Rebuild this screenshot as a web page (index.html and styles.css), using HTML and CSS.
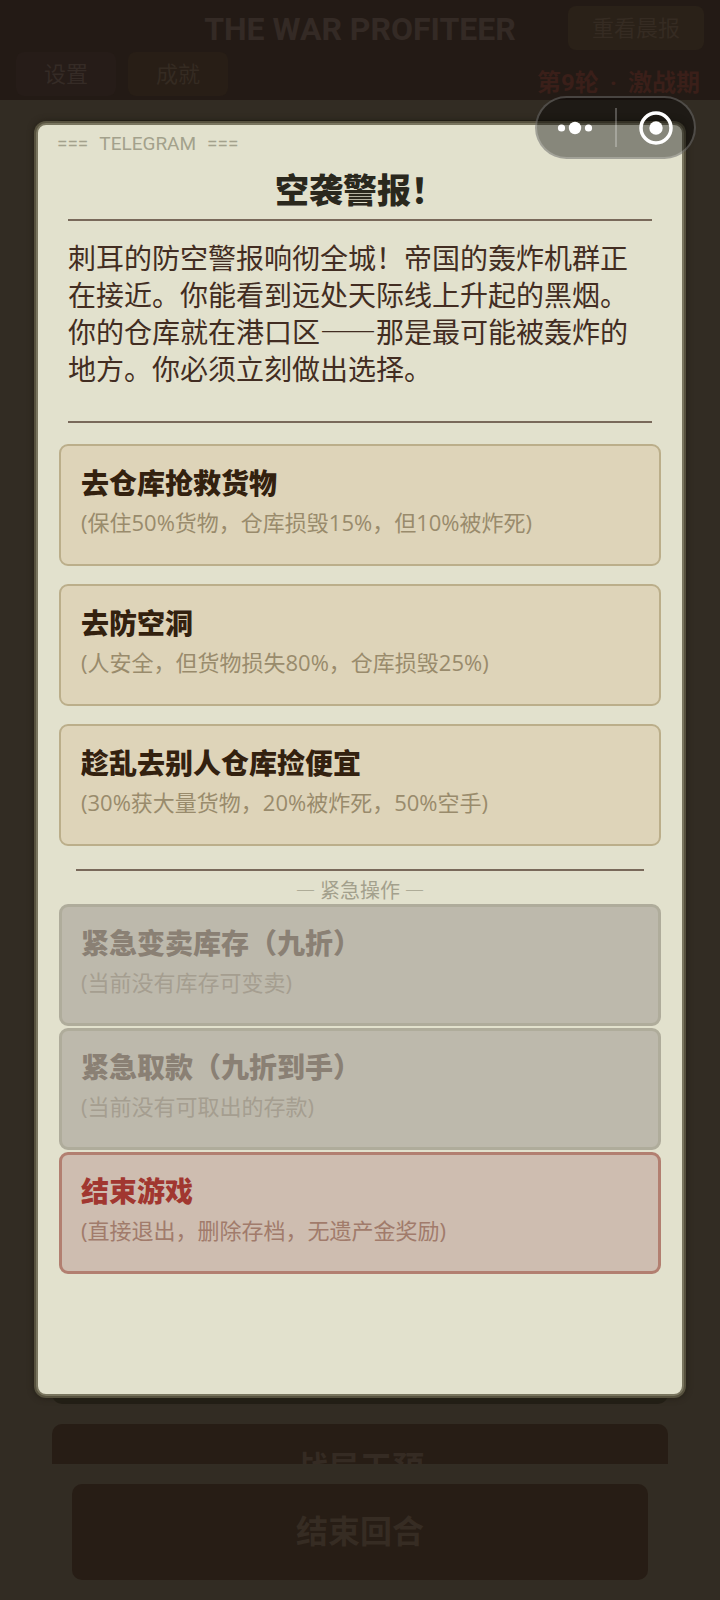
FILE: index.html
```html
<!DOCTYPE html>
<html lang="zh-CN">
<head>
<meta charset="utf-8">
<meta name="viewport" content="width=device-width, initial-scale=1">
<title>THE WAR PROFITEER</title>
<link rel="stylesheet" href="styles.css">
</head>
<body>
<div class="app">
  <header class="topbar">
    <h1 class="topbar-title">THE WAR PROFITEER</h1>
    <button class="chip chip-report" type="button">重看晨报</button>
    <div class="topbar-tools">
      <button class="chip chip-plain" type="button">设置</button>
      <button class="chip" type="button">成就</button>
    </div>
    <p class="round"><span>第9轮</span><span>·</span><span>激战期</span></p>
  </header>
  <main class="board">
    <div class="board-card"></div>
    <button class="board-action" type="button">战局干预</button>
  </main>
  <footer class="bottombar">
    <button class="end-turn" type="button">结束回合</button>
  </footer>
</div>

<div class="overlay">
  <section class="telegram" role="dialog" aria-labelledby="telegram-title">
    <p class="telegram-mark"><span>===</span><span>TELEGRAM</span><span>===</span></p>
    <h2 class="telegram-title" id="telegram-title">空袭警报！</h2>
    <p class="telegram-body">刺耳的防空警报响彻全城！帝国的轰炸机群正在接近。你能看到远处天际线上升起的黑烟。你的仓库就在港口区——那是最可能被轰炸的地方。你必须立刻做出选择。</p>
    <div class="options">
      <button class="option" type="button">
        <span class="option-name">去仓库抢救货物</span>
        <span class="option-note">(保住50%货物，仓库损毁15%，但10%被炸死)</span>
      </button>
      <button class="option" type="button">
        <span class="option-name">去防空洞</span>
        <span class="option-note">(人安全，但货物损失80%，仓库损毁25%)</span>
      </button>
      <button class="option" type="button">
        <span class="option-name">趁乱去别人仓库捡便宜</span>
        <span class="option-note">(30%获大量货物，20%被炸死，50%空手)</span>
      </button>
    </div>
    <h3 class="urgent-title">— 紧急操作 —</h3>
    <div class="options options-urgent">
      <button class="option option-disabled" type="button" disabled>
        <span class="option-name">紧急变卖库存（九折）</span>
        <span class="option-note">(当前没有库存可变卖)</span>
      </button>
      <button class="option option-disabled" type="button" disabled>
        <span class="option-name">紧急取款（九折到手）</span>
        <span class="option-note">(当前没有可取出的存款)</span>
      </button>
      <button class="option option-danger" type="button">
        <span class="option-name">结束游戏</span>
        <span class="option-note">(直接退出，删除存档，无遗产金奖励)</span>
      </button>
    </div>
  </section>
</div>

<div class="capsule">
  <button class="capsule-button" type="button" aria-label="更多">
    <svg width="36" height="16" viewBox="0 0 36 16" fill="#fff"><circle cx="4.500" cy="8" r="3.600"/><circle cx="18" cy="8" r="6.200"/><circle cx="31.500" cy="8" r="3.600"/></svg>
  </button>
  <button class="capsule-button" type="button" aria-label="关闭">
    <svg width="34" height="34" viewBox="0 0 34 34"><circle cx="17" cy="17" r="15" fill="none" stroke="#fff" stroke-width="3.500"/><circle cx="17" cy="17" r="6.700" fill="#fff"/></svg>
  </button>
</div>
</body>
</html>
```

FILE: styles.css
```css
* {
  box-sizing: border-box;
}

body {
  margin: 0;
  background: #322c23;
  font-family: Roboto, "Noto Sans CJK SC", sans-serif;
}

h1,
h2,
h3,
p {
  margin: 0;
}

button {
  margin: 0;
  padding: 0;
  border: 0;
  font-family: inherit;
}

.app {
  display: flex;
  flex-direction: column;
  height: 100vh;
}

.topbar {
  display: grid;
  grid-template-columns: 1fr auto 1fr;
  grid-template-rows: 44px 44px;
  gap: 2px 0;
  padding: 6px 16px 4px;
  background: #231a15;
}

.topbar-title {
  grid-column: 2;
  padding-top: 3px;
  color: #342a25;
  font-size: 32px;
  line-height: 41px;
  white-space: nowrap;
}

.chip {
  width: 100px;
  height: 44px;
  padding-bottom: 4px;
  border-radius: 8px;
  background: #281e16;
  color: #352b22;
  font-size: 22px;
}

.chip-plain {
  background: #261c18;
  color: #352b26;
}

.chip-report {
  grid-column: 3;
  justify-self: end;
  width: 136px;
  background: #2a2118;
}

.topbar-tools {
  grid-column: 1 / 3;
  display: flex;
  gap: 12px;
}

.round {
  grid-column: 3;
  align-self: end;
  justify-self: end;
  display: flex;
  gap: 11px;
  padding-right: 4px;
  color: #3a1f19;
  font-size: 24px;
  font-weight: 700;
  line-height: 26px;
  white-space: nowrap;
}

.board {
  flex: 1;
  min-height: 0;
  overflow: hidden;
  display: flex;
  flex-direction: column;
  gap: 20px;
  padding: 20px 52px 0;
}

.board-card {
  flex: 1;
  border-radius: 10px;
  background: #231f16;
}

.board-action {
  flex: none;
  height: 88px;
  margin-bottom: -48px;
  padding-bottom: 6px;
  border-radius: 10px;
  background: #271d15;
  color: #352b23;
  font-size: 32px;
  font-weight: 700;
}

.bottombar {
  padding: 20px 72px;
}

.end-turn {
  display: block;
  width: 100%;
  height: 96px;
  padding-bottom: 6px;
  border-radius: 10px;
  background: #271d15;
  color: #362c23;
  font-size: 32px;
  font-weight: 700;
}

.overlay {
  position: absolute;
  top: 0;
  left: 0;
  right: 0;
  padding: 123px 36px 0;
}

.telegram {
  padding: 8px 19px 120px;
  border: 2px solid #79755f;
  border-radius: 10px;
  background: #e2e1cd;
  box-shadow: 0 0 0 2px #57523f, 0 0 6px 2px #231f16;
}

.telegram-mark {
  display: flex;
  gap: 11px;
  color: #a3a18c;
  font-size: 19px;
  line-height: 22px;
}

.telegram-title {
  margin: 14px 11px 0;
  padding-bottom: 6px;
  border-bottom: 2px solid #79695a;
  color: #2a281d;
  font-size: 34px;
  font-weight: 900;
  line-height: 44px;
  text-align: center;
}

.telegram-body {
  margin: 0 11px;
  padding: 18px 0 34px;
  border-bottom: 2px solid #79695a;
  color: #422d22;
  font-family: "Noto Sans CJK SC", sans-serif;
  font-size: 28px;
  line-height: 37px;
}

.options {
  display: flex;
  flex-direction: column;
  gap: 18px;
  margin: 21px 2px 0;
}

.option {
  display: flex;
  flex-direction: column;
  gap: 4px;
  padding: 20px 20px 28px;
  border: 2px solid #bbae8a;
  border-radius: 9px;
  background: #ded4b9;
  color: #33210f;
  text-align: left;
}

.option-name {
  font-size: 28px;
  font-weight: 900;
  line-height: 38px;
}

.option-note {
  color: #998b6c;
  font-family: "Open Sans", "Noto Sans CJK SC", sans-serif;
  font-size: 22px;
  line-height: 28px;
}

.urgent-title {
  margin: 23px 19px 0;
  padding-top: 5px;
  border-top: 2px solid #79695a;
  color: #a3a08c;
  font-family: "Noto Sans CJK SC", sans-serif;
  font-size: 20px;
  font-weight: 400;
  line-height: 28px;
  text-align: center;
}

.options-urgent {
  gap: 2px;
  margin-top: 0;
}

.options-urgent .option {
  padding: 19px 19px 27px;
  border-width: 3px;
}

.option-disabled {
  border-color: #afac9b;
  background: #bdb9ac;
  color: #8a8074;
}

.option-disabled .option-note {
  color: #a59e90;
}

.option-danger {
  border-color: #b27f70;
  background: #cebdb0;
  color: #a13730;
}

.option-danger .option-note {
  color: #a17b6b;
}

.capsule {
  position: absolute;
  top: 96px;
  right: 24px;
  display: flex;
  width: 161px;
  height: 63px;
  border: 2px solid rgba(255, 255, 255, 0.22);
  border-radius: 32px;
  background: rgba(0, 0, 0, 0.4);
}

.capsule-button {
  flex: 1;
  display: flex;
  align-items: center;
  justify-content: center;
  margin: 10px 0;
  padding-right: 2px;
  background: none;
}

.capsule-button + .capsule-button {
  padding: 0 0 0 2px;
  border-left: 2px solid rgba(255, 255, 255, 0.25);
}
```
